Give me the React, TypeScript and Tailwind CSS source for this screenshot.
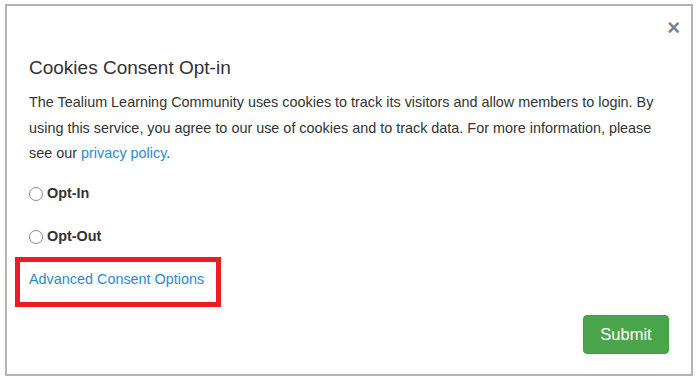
import React from "react";

export default function App() {
  return (
    <div className="w-[697px] h-[380px] bg-white pt-[4px] pl-[5px]" style={{ fontFamily: '"Liberation Sans", Arial, sans-serif' }}>
      <div className="relative w-[688px] h-[372px] border-2 border-[#b4b4b4] bg-white text-[#333]">
        <button className="absolute right-[11px] top-[11px] text-[22px] leading-[22px] font-bold text-[#808080]">×</button>
        <div className="pl-[22px] pr-[16px] pt-[48px]">
          <h4 className="text-[19px] leading-[28px] text-[#333]">Cookies Consent Opt-in</h4>
          <p className="mt-[8px] text-[14.4px] leading-[25.5px]">
            The Tealium Learning Community uses cookies to track its visitors and allow members to login. By using this service, you agree to our use of cookies and to track data. For more information, please see our <a className="text-[#2a8ccc]">privacy policy</a>.
          </p>
          <label className="mt-[15px] flex items-center h-[24px] text-[14.4px] font-bold">
            <span className="w-[14px] h-[14px] rounded-full border border-[#8a8a8a] mr-[4px] bg-white" />
            Opt-In
          </label>
          <label className="mt-[19px] flex items-center h-[24px] text-[14.4px] font-bold">
            <span className="w-[14px] h-[14px] rounded-full border border-[#8a8a8a] mr-[4px] bg-white" />
            Opt-Out
          </label>
        </div>
        <div className="pl-[8px] mt-[8px]">
          <div className="w-[206px] h-[50px] border-[5px] border-[#ed1c24] flex items-center pl-[9px] pb-[3px]">
            <a className="text-[14.4px] text-[#2a8ccc]">Advanced Consent Options</a>
          </div>
        </div>
        <div className="flex justify-end pr-[22px] mt-[8px]">
          <button className="w-[86px] h-[39px] rounded-[4px] bg-[#4ba54b] border border-[#449d44] text-white text-[16.5px]">Submit</button>
        </div>
      </div>
    </div>
  );
}
